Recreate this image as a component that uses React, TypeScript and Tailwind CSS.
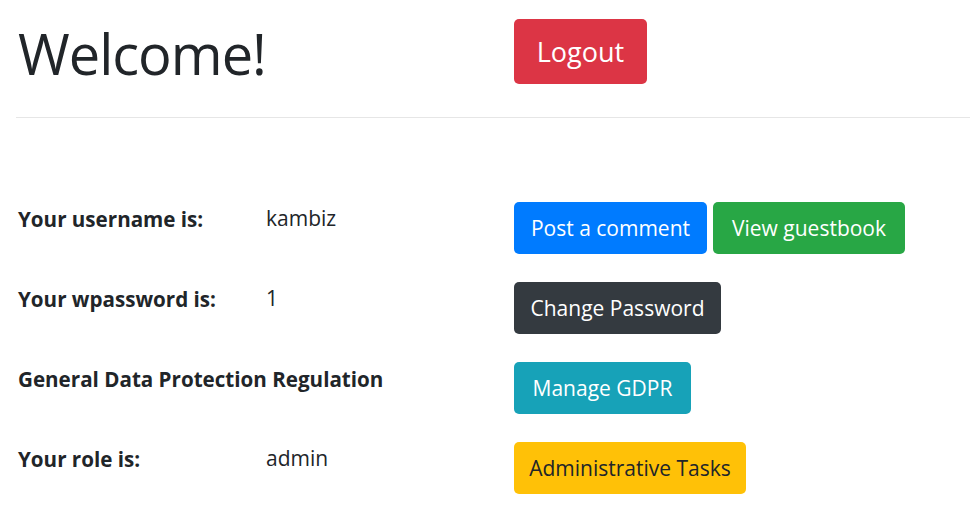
export default function App() {
  const rows = [
    {
      label: "Your username is:",
      value: "kambiz",
      buttons: [
        { text: "Post a comment", cls: "w-[193px] bg-[#007bff] text-white" },
        { text: "View guestbook", cls: "w-[192px] bg-[#28a745] text-white" },
      ],
    },
    {
      label: "Your wpassword is:",
      value: "1",
      buttons: [{ text: "Change Password", cls: "w-[207px] bg-[#343a40] text-white" }],
    },
    {
      label: "General Data Protection Regulation",
      value: "",
      buttons: [{ text: "Manage GDPR", cls: "w-[177px] bg-[#17a2b8] text-white" }],
    },
    {
      label: "Your role is:",
      value: "admin",
      buttons: [{ text: "Administrative Tasks", cls: "w-[232px] bg-[#ffc107] text-[#212529]" }],
    },
  ];
  return (
    <div className="min-h-[512px] bg-white text-[#212529] font-['Open_Sans','Noto_Sans',sans-serif]">
      <div className="flex items-start pl-[18px] pt-[19px]">
        <h1 className="w-[496px] pt-[4px] text-[56px] leading-[60px] font-medium tracking-[-1px]">Welcome!</h1>
        <button className="flex h-[65px] w-[133px] items-center justify-center rounded-[5px] bg-[#dc3545] text-[27px] leading-none text-white">
          Logout
        </button>
      </div>
      <div className="ml-[16px] mr-[4px] mt-[33px] border-t border-[#e6e6e6]" />
      <div className="mt-[84px] grid grid-cols-[248px_248px_1fr] pl-[18px]">
        {rows.map((r) => (
          <div key={r.label} className="contents">
            <div className="h-[80px] whitespace-nowrap pt-[2px] text-[20.6px] font-bold leading-[30px]">{r.label}</div>
            <div className="h-[80px] pt-[1px] text-[21px] leading-[30px]">{r.value}</div>
            <div className="flex h-[80px] items-start gap-[6px]">
              {r.buttons.map((b) => (
                <button
                  key={b.text}
                  className={`flex h-[52px] items-center justify-center whitespace-nowrap rounded-[5px] pb-[1px] text-[21px] leading-[30px] ${b.cls}`}
                >
                  {b.text}
                </button>
              ))}
            </div>
          </div>
        ))}
      </div>
    </div>
  );
}
